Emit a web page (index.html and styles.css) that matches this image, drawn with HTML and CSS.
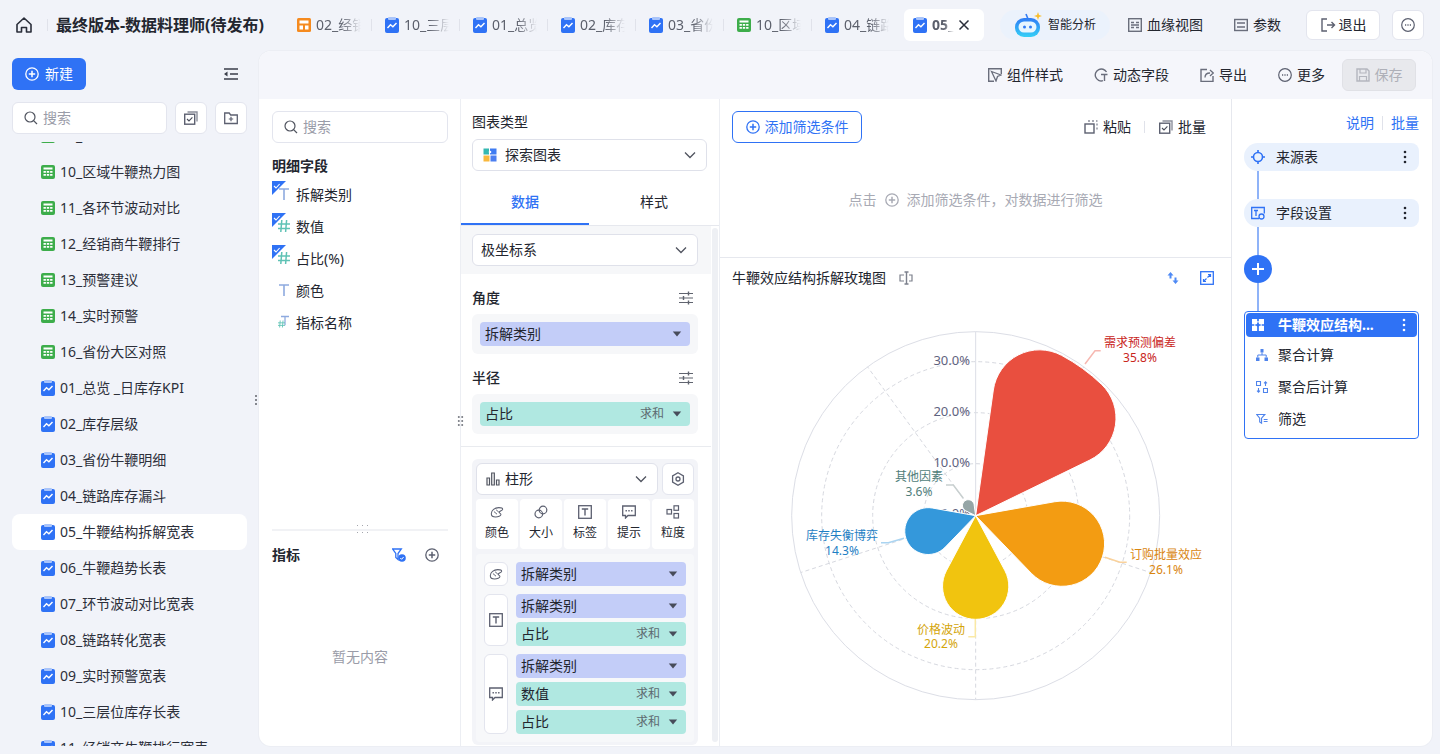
FILE: index.html
```html
<!DOCTYPE html>
<html>
  <head>
    <title>最终版本-数据料理师(待发布)</title>
    <link rel="stylesheet" href="styles.css">
  </head>
  <body>
    <svg class="sprite" width="0" height="0">
      <symbol id="i-chart" viewBox="0 0 14 16">
        <rect x="0" y="1" width="14" height="15" rx="2" fill="#2f72f5"/>
        <rect x="3" y="0" width="8" height="3" rx="1" fill="#a9c4fa"/>
        <path d="M2.5 11l3-3.2 2.4 2 3.6-3.8" fill="none" stroke="#fff" stroke-width="1.4"/>
      </symbol>
      <symbol id="i-table" viewBox="0 0 14 14">
        <rect width="14" height="14" rx="2" fill="#3dad4b"/>
        <path d="M2.5 2.5h9v2h-9zM2.5 6h2.4v1.7H2.5zM5.8 6h2.4v1.7H5.8zM9.1 6h2.4v1.7H9.1zM2.5 9h2.4v1.7H2.5zM5.8 9h2.4v1.7H5.8zM9.1 9h2.4v1.7H9.1z" fill="#fff"/>
      </symbol>
      <symbol id="i-plus" viewBox="0 0 14 14">
        <circle cx="7" cy="7" r="6.2" fill="none" stroke="currentColor" stroke-width="1.3"/>
        <path d="M7 3.8v6.4M3.8 7h6.4" stroke="currentColor" stroke-width="1.5"/>
      </symbol>
      <symbol id="i-search" viewBox="0 0 14 14">
        <circle cx="6" cy="6" r="5" fill="none" stroke="currentColor" stroke-width="1.2"/>
        <path d="M9.6 9.6l3.4 3.4" stroke="currentColor" stroke-width="1.2"/>
      </symbol>
      <symbol id="i-chev" viewBox="0 0 12 8">
        <path d="M1 1.5l5 5 5-5" fill="none" stroke="#50545f" stroke-width="1.3"/>
      </symbol>
      <symbol id="i-caret" viewBox="0 0 10 6">
        <path d="M.8.5h8.4L5 5.5z" fill="#474c5a"/>
      </symbol>
      <symbol id="i-adjust" viewBox="0 0 14 14">
        <path d="M0 2.5h14M0 7h14M0 11.5h14" stroke="#60646f" stroke-width="1.2"/>
        <path d="M9.5.5v4M4.500 5v4M9.5 9.5v4" stroke="#60646f" stroke-width="1.4"/>
      </symbol>
      <symbol id="i-dots" viewBox="0 0 4 14">
        <circle cx="2" cy="2" r="1.3" fill="currentColor"/>
        <circle cx="2" cy="7" r="1.3" fill="currentColor"/>
        <circle cx="2" cy="12" r="1.3" fill="currentColor"/>
      </symbol>
      <symbol id="i-batch" viewBox="0 0 14 14">
        <rect x=".7" y="3.2" width="10" height="10" fill="none" stroke="#5c6070" stroke-width="1.4"/>
        <path d="M3.5 1H13v9.5" fill="none" stroke="#8c8f9b" stroke-width="1.4"/>
        <path d="M3 8l2 2 3.4-3.6" fill="none" stroke="#4a4e5b" stroke-width="1.1"/>
      </symbol>
      <symbol id="i-t" viewBox="0 0 10 12">
        <path d="M0 1h10M5 1v11" fill="none" stroke="#8eaadf" stroke-width="1.6"/>
      </symbol>
      <symbol id="i-num" viewBox="0 0 12 12">
        <path d="M3.8 0L2.8 12M8.6 0L7.6 12M0 4h12M0 8.4h12" fill="none" stroke="#5fc2b5" stroke-width="1.5"/>
      </symbol>
      <symbol id="i-tick" viewBox="0 0 14 14">
        <path d="M0 0h14L0 14z" fill="#2f72f5"/>
        <path d="M2 5l2 2 3.6-4" fill="none" stroke="#fff" stroke-width="1.1"/>
      </symbol>
      <symbol id="i-palette" viewBox="0 0 16 14">
        <path d="M1.5 9C1.5 5 5.5 2 10 2c2.5 0 4.5.8 4.5 1.8 0 1.5-4 2-4 3.5 0 1.4 2 1.2 2 2.5 0 1.7-3.3 3-6 3-2.900 0-5-1.300-5-3.800z" fill="none" stroke="#5c6070" stroke-width="1.2"/>
        <path d="M4.500 6.500l3.500 3M7 4.500l3 2.500" stroke="#5c6070" stroke-width="1.1"/>
      </symbol>
      <symbol id="i-label" viewBox="0 0 14 14">
        <rect x=".7" y=".7" width="12.6" height="12.6" fill="none" stroke="#5c6070" stroke-width="1.3"/>
        <path d="M3.8 4h6.400M7 4v6.500" stroke="#5c6070" stroke-width="1.4"/>
      </symbol>
      <symbol id="i-tip" viewBox="0 0 14 14">
        <path d="M.7 1h12.6v9.500H6L3.500 13v-2.500H.7z" fill="none" stroke="#5c6070" stroke-width="1.3"/>
        <path d="M3.500 5.800h1.400M6.300 5.800h1.400M9.100 5.800h1.400" stroke="#5c6070" stroke-width="1.4"/>
      </symbol>
    </svg>

    <header class="topbar">
      <svg class="home" width="16" height="16" viewBox="0 0 16 16"><path d="M1 7.500L8 1l7 6.500V15h-4.500v-4.500h-5V15H1z" fill="none" stroke="#2a2e3a" stroke-width="1.6" stroke-linejoin="round"/></svg>
      <span class="top-sep"></span>
      <span class="doc-title">最终版本-数据料理师(待发布)</span>
      <div class="tabs">
        <div class="tab"><svg class="tab-icon" viewBox="0 0 14 14"><rect width="14" height="14" rx="1.5" fill="#f58a1f"/><path d="M2.500 2.500h9v3h-9zM2.500 7.500H6v4H2.500zM8 7.500h3.500v4H8z" fill="#fff"/></svg><span class="tab-text">02_经销商</span></div>
        <div class="tab"><svg class="tab-icon"><use href="#i-chart"/></svg><span class="tab-text">10_三层位</span></div>
        <div class="tab"><svg class="tab-icon"><use href="#i-chart"/></svg><span class="tab-text">01_总览</span></div>
        <div class="tab"><svg class="tab-icon"><use href="#i-chart"/></svg><span class="tab-text">02_库存</span></div>
        <div class="tab"><svg class="tab-icon"><use href="#i-chart"/></svg><span class="tab-text">03_省份</span></div>
        <div class="tab"><svg class="tab-icon"><use href="#i-table"/></svg><span class="tab-text">10_区域</span></div>
        <div class="tab"><svg class="tab-icon"><use href="#i-chart"/></svg><span class="tab-text">04_链路</span></div>
        <div class="tab tab-on"><svg class="tab-icon"><use href="#i-chart"/></svg><span class="tab-text">05_牛鞭</span>
          <svg class="tab-close" width="12" height="12" viewBox="0 0 12 12"><path d="M1.500 1.500l9 9M10.500 1.500l-9 9" stroke="#2a2e3a" stroke-width="1.5"/></svg>
        </div>
      </div>
      <div class="ai-pill">
        <svg width="27" height="26" viewBox="0 0 27 26">
          <defs><linearGradient id="robot" x1="0" y1="0" x2="0" y2="1"><stop offset="0" stop-color="#2f7bf5"/><stop offset="1" stop-color="#33d0f7"/></linearGradient></defs>
          <path d="M13 7l-2-5" stroke="#2f7bf5" stroke-width="1.6"/>
          <rect x="0" y="6" width="25" height="19" rx="9" fill="url(#robot)"/>
          <rect x="3.500" y="9.500" width="18" height="11" rx="5.5" fill="#e6f6ff"/>
          <circle cx="9.500" cy="15" r="1.500" fill="#2f7bf5"/><circle cx="15.500" cy="15" r="1.500" fill="#2f7bf5"/>
          <path d="M23 0l1 3 3 1-3 1-1 3-1-3-3-1 3-1z" fill="#f9bd2b"/>
        </svg>
        <span>智能分析</span>
      </div>
      <div class="top-item lineage"><svg width="14" height="14" viewBox="0 0 14 14"><rect x=".7" y=".7" width="12.6" height="12.6" fill="none" stroke="#6a6e7c" stroke-width="1.4"/><path d="M3 4.500h3M8 4.500h3M3 9.500h3M8 9.500h3M3 7h8" stroke="#6a6e7c" stroke-width="1.3"/></svg><span>血缘视图</span></div>
      <div class="top-item params"><svg width="14" height="14" viewBox="0 0 14 14"><rect x=".7" y="1.500" width="12.6" height="11" fill="none" stroke="#6a6e7c" stroke-width="1.4"/><path d="M3 5h8M3 9h8" stroke="#6a6e7c" stroke-width="1.3"/></svg><span>参数</span></div>
      <button class="exit-btn"><svg width="16" height="16" viewBox="0 0 16 16"><path d="M7 2H2v12h5M7 8h7.500M11.500 5l3 3-3 3" fill="none" stroke="#5c6070" stroke-width="1.4"/></svg><span>退出</span></button>
      <button class="more-btn"><svg class="ic14" viewBox="0 0 14 14"><circle cx="7" cy="7" r="6.3" fill="none" stroke="#5c6070" stroke-width="1.2"/><path d="M4 7h1.200M6.400 7h1.200M8.800 7H10" stroke="#5c6070" stroke-width="1.4"/></svg></button>
    </header>

    <div class="workspace">
      <aside class="sidebar">
        <div class="side-top">
          <button class="new-btn"><svg class="ic14"><use href="#i-plus"/></svg><span>新建</span></button>
          <svg width="14" height="12" viewBox="0 0 14 12"><path d="M0 1h14M6 6h8M0 11h14" stroke="#3a3e4a" stroke-width="1.6"/><path d="M0 6l3.500-2.500v5z" fill="#3a3e4a"/></svg>
        </div>
        <div class="side-search">
          <div class="search-box"><svg class="ic14 search-ic"><use href="#i-search"/></svg><span>搜索</span></div>
          <button class="square-btn"><svg class="ic14"><use href="#i-batch"/></svg></button>
          <button class="square-btn"><svg class="ic14" viewBox="0 0 14 14"><path d="M.7 2h4.500l1.500 2h6.600v8.500H.7z" fill="none" stroke="#5c6070" stroke-width="1.3"/><path d="M7 5.800v4.400M4.800 8h4.400" stroke="#5c6070" stroke-width="1.2"/></svg></button>
        </div>
        <div class="side-list">
          <div class="side-row first"><svg class="ic14"><use href="#i-table"/></svg><span>09_</span></div>
          <div class="side-row"><svg class="ic14"><use href="#i-table"/></svg><span>10_区域牛鞭热力图</span></div>
          <div class="side-row"><svg class="ic14"><use href="#i-table"/></svg><span>11_各环节波动对比</span></div>
          <div class="side-row"><svg class="ic14"><use href="#i-table"/></svg><span>12_经销商牛鞭排行</span></div>
          <div class="side-row"><svg class="ic14"><use href="#i-table"/></svg><span>13_预警建议</span></div>
          <div class="side-row"><svg class="ic14"><use href="#i-table"/></svg><span>14_实时预警</span></div>
          <div class="side-row"><svg class="ic14"><use href="#i-table"/></svg><span>16_省份大区对照</span></div>
          <div class="side-row"><svg class="ic-doc"><use href="#i-chart"/></svg><span>01_总览 _日库存KPI</span></div>
          <div class="side-row"><svg class="ic-doc"><use href="#i-chart"/></svg><span>02_库存层级</span></div>
          <div class="side-row"><svg class="ic-doc"><use href="#i-chart"/></svg><span>03_省份牛鞭明细</span></div>
          <div class="side-row"><svg class="ic-doc"><use href="#i-chart"/></svg><span>04_链路库存漏斗</span></div>
          <div class="side-row side-on"><svg class="ic-doc"><use href="#i-chart"/></svg><span>05_牛鞭结构拆解宽表</span></div>
          <div class="side-row"><svg class="ic-doc"><use href="#i-chart"/></svg><span>06_牛鞭趋势长表</span></div>
          <div class="side-row"><svg class="ic-doc"><use href="#i-chart"/></svg><span>07_环节波动对比宽表</span></div>
          <div class="side-row"><svg class="ic-doc"><use href="#i-chart"/></svg><span>08_链路转化宽表</span></div>
          <div class="side-row"><svg class="ic-doc"><use href="#i-chart"/></svg><span>09_实时预警宽表</span></div>
          <div class="side-row"><svg class="ic-doc"><use href="#i-chart"/></svg><span>10_三层位库存长表</span></div>
          <div class="side-row"><svg class="ic-doc"><use href="#i-chart"/></svg><span>11_经销商牛鞭排行宽表</span></div>
        </div>
        <span class="grip grip-side"></span>
      </aside>

      <main class="panel">
        <div class="toolbar">
          <div class="tool"><svg class="ic14" viewBox="0 0 14 14"><path d="M13.300 6V.7H.7v12.600H6" fill="none" stroke="#6a6e7c" stroke-width="1.4"/><path d="M3.500 3.500l9.500 3.500-3.500 1.500L8 13z" fill="none" stroke="#6a6e7c" stroke-width="1.3"/></svg><span>组件样式</span></div>
          <div class="tool"><svg class="ic14" viewBox="0 0 14 14"><path d="M12.500 4A6 6 0 1 0 9 12.700" fill="none" stroke="#6a6e7c" stroke-width="1.4"/><path d="M7 6.500h6.500M10.500 6.500V13" stroke="#6a6e7c" stroke-width="1.4"/></svg><span>动态字段</span></div>
          <div class="tool"><svg class="ic14" viewBox="0 0 14 14"><path d="M7 1.500H1v12h12V8" fill="none" stroke="#6a6e7c" stroke-width="1.4"/><path d="M5 9.500c0-3 2-4.500 5-4.500M10 2l3.300 3-3.300 3" fill="none" stroke="#6a6e7c" stroke-width="1.3"/></svg><span>导出</span></div>
          <div class="tool"><svg class="ic14" viewBox="0 0 14 14"><circle cx="7" cy="7" r="6.3" fill="none" stroke="#5c6070" stroke-width="1.2"/><path d="M4 7h1.200M6.400 7h1.200M8.800 7H10" stroke="#5c6070" stroke-width="1.4"/></svg><span>更多</span></div>
          <button class="save-btn"><svg class="ic14" viewBox="0 0 14 14"><path d="M1 1h10l2 2v10H1z" fill="none" stroke="#b4b6be" stroke-width="1.4"/><path d="M4 1v4h6V1M3.500 13V8.500h7V13" fill="none" stroke="#b4b6be" stroke-width="1.2"/></svg><span>保存</span></button>
        </div>

        <div class="panel-body">
          <section class="fields">
            <div class="search-box field-search"><svg class="ic14 search-ic"><use href="#i-search"/></svg><span>搜索</span></div>
            <div class="sec-title field-head">明细字段</div>
            <div class="field-row"><svg class="f-ic" viewBox="0 1 24 28"><use href="#i-tick" x="0" y="1" width="14" height="14"/><use href="#i-t" x="7" y="8" width="10" height="12"/></svg><span>拆解类别</span></div>
            <div class="field-row"><svg class="f-ic" viewBox="0 1 24 28"><use href="#i-tick" x="0" y="1" width="14" height="14"/><use href="#i-num" x="6" y="8" width="12" height="12"/></svg><span>数值</span></div>
            <div class="field-row"><svg class="f-ic" viewBox="0 1 24 28"><use href="#i-tick" x="0" y="1" width="14" height="14"/><use href="#i-num" x="6" y="8" width="12" height="12"/></svg><span>占比(%)</span></div>
            <div class="field-row"><svg class="f-ic" viewBox="0 1 24 28"><use href="#i-t" x="7" y="8" width="10" height="12"/></svg><span>颜色</span></div>
            <div class="field-row"><svg class="f-ic" viewBox="0 1 24 28"><use href="#i-t" x="9" y="7" width="8" height="11"/><use href="#i-num" x="6" y="12" width="7" height="8"/></svg><span>指标名称</span></div>
            <div class="metrics">
              <span class="grip grip-metrics"></span>
              <div class="metrics-head">
                <span class="sec-title">指标</span>
                <svg class="filter-ic" width="14" height="14" viewBox="0 0 14 14"><path d="M.7 1h8.600L6 5.500v6L3.800 9.500v-4z" fill="none" stroke="#2f72f5" stroke-width="1.3"/><circle cx="10" cy="10" r="3.800" fill="#2f72f5"/><path d="M8.300 10l1.300 1.300 2-2.300" fill="none" stroke="#fff"/></svg>
                <svg class="ic14 plus-grey"><use href="#i-plus"/></svg>
              </div>
              <div class="empty">暂无内容</div>
            </div>
          </section>

          <section class="config">
            <div class="cfg-label">图表类型</div>
            <div class="select type-select">
              <svg class="ic14" viewBox="0 0 14 14"><rect x=".5" y=".5" width="5.500" height="6" fill="#35b8b1"/><rect x="7" y=".5" width="6.500" height="6" fill="#3f7cf2"/><rect x=".5" y="7.500" width="6" height="6" fill="#f9b83c"/><rect x="7.500" y="7.500" width="6" height="6" fill="#4c7ff0"/><circle cx="7" cy="4" r="1.300" fill="#fff"/></svg>
              <span>探索图表</span><svg class="chev"><use href="#i-chev"/></svg>
            </div>
            <div class="cfg-tabs"><div class="cfg-tab cfg-tab-on">数据</div><div class="cfg-tab">样式</div></div>
            <div class="cfg-scroll">
              <div class="cfg-content">
                <div class="coord-bar"><div class="select"><span>极坐标系</span><svg class="chev"><use href="#i-chev"/></svg></div></div>
                <div class="axis-head"><span>角度</span><svg class="ic14"><use href="#i-adjust"/></svg></div>
                <div class="axis-box"><div class="pill pill-dim"><span>拆解类别</span><svg class="caret"><use href="#i-caret"/></svg></div></div>
                <div class="axis-head"><span>半径</span><svg class="ic14"><use href="#i-adjust"/></svg></div>
                <div class="axis-box"><div class="pill pill-mea"><span>占比</span><em>求和</em><svg class="caret"><use href="#i-caret"/></svg></div></div>
                <div class="cfg-line"></div>
                <div class="marks">
                  <div class="marks-top">
                    <div class="select mark-select"><svg class="ic14" viewBox="0 0 14 14"><path d="M1 6h2.500v7H1zM5.700 1h2.600v12H5.700zM10.500 8H13v5h-2.500z" fill="none" stroke="#50545f" stroke-width="1.2"/></svg><span>柱形</span><svg class="chev"><use href="#i-chev"/></svg></div>
                    <button class="square-btn"><svg class="ic14" viewBox="0 0 14 14"><path d="M7 .8l5.400 3.100v6.200L7 13.200l-5.400-3.100V3.900z" fill="none" stroke="#5c6070" stroke-width="1.3"/><circle cx="7" cy="7" r="2" fill="none" stroke="#5c6070" stroke-width="1.3"/></svg></button>
                  </div>
                  <div class="mark-cells">
                    <div class="cell"><svg class="ic14"><use href="#i-palette"/></svg><span>颜色</span></div>
                    <div class="cell"><svg class="ic14" viewBox="0 0 14 14"><circle cx="4.800" cy="9" r="3.800" fill="none" stroke="#5c6070" stroke-width="1.2"/><circle cx="9" cy="5" r="3.800" fill="none" stroke="#5c6070" stroke-width="1.2"/></svg><span>大小</span></div>
                    <div class="cell"><svg class="ic14"><use href="#i-label"/></svg><span>标签</span></div>
                    <div class="cell"><svg class="ic14"><use href="#i-tip"/></svg><span>提示</span></div>
                    <div class="cell"><svg class="ic14" viewBox="0 0 14 14"><rect x="1" y="4.500" width="4.500" height="4.500" fill="none" stroke="#5c6070" stroke-width="1.2"/><rect x="8" y=".8" width="4.500" height="4.500" fill="none" stroke="#5c6070" stroke-width="1.2"/><rect x="8" y="8.500" width="4.500" height="4.500" fill="none" stroke="#5c6070" stroke-width="1.2"/></svg><span>粒度</span></div>
                  </div>
                  <div class="mark-rows">
                    <div class="mark-group">
                      <div class="chip"><svg class="ic14"><use href="#i-palette"/></svg></div>
                      <div class="pills"><div class="pill pill-dim"><span>拆解类别</span><svg class="caret"><use href="#i-caret"/></svg></div></div>
                    </div>
                    <div class="mark-group">
                      <div class="chip"><svg class="ic14"><use href="#i-label"/></svg></div>
                      <div class="pills">
                        <div class="pill pill-dim"><span>拆解类别</span><svg class="caret"><use href="#i-caret"/></svg></div>
                        <div class="pill pill-mea"><span>占比</span><em>求和</em><svg class="caret"><use href="#i-caret"/></svg></div>
                      </div>
                    </div>
                    <div class="mark-group">
                      <div class="chip"><svg class="ic14"><use href="#i-tip"/></svg></div>
                      <div class="pills">
                        <div class="pill pill-dim"><span>拆解类别</span><svg class="caret"><use href="#i-caret"/></svg></div>
                        <div class="pill pill-mea"><span>数值</span><em>求和</em><svg class="caret"><use href="#i-caret"/></svg></div>
                        <div class="pill pill-mea"><span>占比</span><em>求和</em><svg class="caret"><use href="#i-caret"/></svg></div>
                      </div>
                    </div>
                  </div>
                </div>
              </div>
              <div class="scrollbar"></div>
            </div>
            <span class="grip grip-config"></span>
          </section>

          <section class="canvas">
            <div class="filter-area">
              <div class="filter-top">
                <button class="add-filter"><svg class="ic14"><use href="#i-plus"/></svg><span>添加筛选条件</span></button>
                <div class="filter-tools">
                  <div class="tool"><svg class="ic14" viewBox="0 0 14 14"><rect x="1" y="4" width="9" height="9" fill="none" stroke="#5c6070" stroke-width="1.4"/><path d="M4 1h2M8 1h2M12 1h1.500M13 3.500v2M13 7.500v2" stroke="#8c8f9b" stroke-width="1.4"/></svg><span>粘贴</span></div>
                  <span class="filter-sep"></span>
                  <div class="tool"><svg class="ic14"><use href="#i-batch"/></svg><span>批量</span></div>
                </div>
              </div>
              <div class="filter-hint"><span>点击</span><svg class="ic14"><use href="#i-plus"/></svg><span>添加筛选条件，对数据进行筛选</span></div>
            </div>
            <div class="chart-head">
              <span>牛鞭效应结构拆解玫瑰图</span>
              <svg class="ic14 title-ic" viewBox="0 0 14 14"><path d="M5 4H1v6h4M10 4h3v6h-3" fill="none" stroke="#7c808c" stroke-width="1.2"/><path d="M7.500 1v12M5.500 1h4M5.500 13h4" fill="none" stroke="#7c808c" stroke-width="1.4"/></svg>
              <svg class="ic14 swap-ic" viewBox="0 0 14 14"><path d="M4.500 1l-3 3.500h2v3h2v-3h2zM9.500 13l3-3.500h-2v-3h-2v3h-2z" fill="#4f8af5"/></svg>
              <svg class="ic14" viewBox="0 0 14 14"><rect x=".7" y=".7" width="12.6" height="12.6" fill="none" stroke="#2f72f5" stroke-width="1.3"/><path d="M8 3.500h2.500V6M10.500 3.500l-3 3M6 10.500H3.500V8M3.500 10.500l3-3" fill="none" stroke="#2f72f5" stroke-width="1.2"/></svg>
            </div>
            <svg class="rose" width="511" height="448" viewBox="720 298 511 448">
              <g class="grid-dash">
                <circle cx="975.67" cy="515.67" r="154"/>
                <circle cx="975.67" cy="515.67" r="103"/>
                <circle cx="975.67" cy="515.67" r="52"/>
                <path d="M975.67 515.67l108.2-148.9M975.67 515.67l175 56.9M975.67 515.67v184M975.67 515.67l-175 56.9M975.67 515.67l-108.2-148.9"/>
              </g>
              <circle class="grid-out" cx="975.67" cy="515.67" r="184"/>
              <path class="grid-out" d="M975.67 331.67v184"/>
              <g class="axis-text">
                <text x="970" y="365">30.0%</text>
                <text x="970" y="416">20.0%</text>
                <text x="970" y="467">10.0%</text>
                <text x="970" y="518">0.0%</text>
              </g>
              <g transform="translate(780 320) scale(.33333)" stroke="#fff" stroke-width="3">
                <path fill="#e94f3f" d="M587 587L640 210A140 140 0 0 1 844.6 106A545.6 545.6 0 0 1 965 193.5A140 140 0 0 1 929.3 420.3Z"/>
                <path fill="#f39c12" d="M587 587L823.7 545.3A127.8 127.8 0 1 1 754 759.9Z"/>
                <path fill="#f1c40f" d="M587 587L674.8 752.1A99.4 99.4 0 1 1 499.2 752.1Z"/>
                <path fill="#3498db" d="M587 587L495.1 682.1A70.3 70.3 0 1 1 456.7 564Z"/>
                <path fill="#95a5a6" d="M587 587L557.2 572.5A17.6 17.6 0 1 1 582.4 554.2Z"/>
              </g>
              <g class="leaders">
                <path stroke="#f6b8b1" d="M1085 364l10-13.300h5.700"/>
                <path stroke="#fad29b" d="M1105 557.300l15 5h6.700"/>
                <path stroke="#fae9a5" d="M975.300 619v17.700h-7"/>
                <path stroke="#aad4f1" d="M904 538.300l-15.700 4.400H881"/>
                <path stroke="#c8cfcf" d="M963.300 498.300l-10-13.300H946"/>
              </g>
              <g class="chart-label">
                <text class="l-red" x="1140" y="346.5">需求预测偏差</text><text class="l-red" x="1140" y="362">35.8%</text>
                <text class="l-orange" x="1166" y="558.5">订购批量效应</text><text class="l-orange" x="1166" y="573.5">26.1%</text>
                <text class="l-yellow" x="941" y="633.5">价格波动</text><text class="l-yellow" x="941" y="648">20.2%</text>
                <text class="l-blue" x="842" y="539.5">库存失衡博弈</text><text class="l-blue" x="842" y="554.5">14.3%</text>
                <text class="l-grey" x="919" y="481">其他因素</text><text class="l-grey" x="919" y="496">3.6%</text>
              </g>
            </svg>
          </section>

          <section class="flow">
            <div class="flow-links"><span>说明</span><i></i><span>批量</span></div>
            <div class="flow-row">
              <svg class="ic14" viewBox="0 0 14 14"><circle cx="7" cy="7" r="4.500" fill="none" stroke="#2f72f5" stroke-width="1.6"/><path d="M7 0v3M7 11v3M0 7h3M11 7h3" stroke="#2f72f5" stroke-width="1.6"/></svg>
              <span>来源表</span><svg class="flow-dots"><use href="#i-dots"/></svg>
            </div>
            <div class="flow-line"></div>
            <div class="flow-row">
              <svg class="ic14" viewBox="0 0 14 14"><path d="M8 12.500H.7v-11h12.600v6" fill="none" stroke="#2f72f5" stroke-width="1.3"/><path d="M3 4.500h4M5 4.500V10" stroke="#2f72f5" stroke-width="1.3"/><circle cx="10.500" cy="10.500" r="2.500" fill="none" stroke="#2f72f5" stroke-width="1.3"/></svg>
              <span>字段设置</span><svg class="flow-dots"><use href="#i-dots"/></svg>
            </div>
            <div class="flow-line"></div>
            <div class="flow-add"><svg width="12" height="12" viewBox="0 0 12 12"><path d="M6 0v12M0 6h12" stroke="#fff" stroke-width="2"/></svg></div>
            <div class="flow-line"></div>
            <div class="flow-block">
              <div class="block-head">
                <svg width="12" height="12" viewBox="0 0 14 14"><path d="M0 0h6v6H0zM8 0h6v6H8zM0 8h6v6H0zM8 8h6v6H8z" fill="#fff"/><path d="M6 2.500h2v1.500H6zM10 6h1.500v2H10zM2.500 6H4v2H2.500z" fill="#fff"/><circle cx="7" cy="7" r="1.800" fill="#2f72f5"/></svg>
                <span>牛鞭效应结构...</span>
                <svg class="flow-dots"><use href="#i-dots"/></svg>
              </div>
              <div class="block-row"><svg width="12" height="12" viewBox="0 0 12 12"><path d="M4.500 0h3v3.500h-3zM0 8.500h3.500V12H0zM8.500 8.500H12V12H8.500z" fill="#4f84ec"/><path d="M6 3.500V6M1.800 8.500V6h8.400v2.500" fill="none" stroke="#4f84ec"/></svg><span>聚合计算</span></div>
              <div class="block-row"><svg width="12" height="12" viewBox="0 0 12 12"><path d="M.5.500h4v4h-4zM7.500 7.500h4v4h-4z" fill="none" stroke="#4f84ec" stroke-width="1.1"/><path d="M9.500 5V.800M8 2.300L9.500.800 11 2.300M2.500 7v4.200M1 9.700l1.500 1.500L4 9.700" fill="none" stroke="#4f84ec" stroke-width="1.1"/></svg><span>聚合后计算</span></div>
              <div class="block-row"><svg width="12" height="12" viewBox="0 0 14 12"><path d="M.7.700h9.600L6.500 5v6L4.300 9.500V5z" fill="none" stroke="#4f84ec" stroke-width="1.3"/><path d="M9 6.500h4.500M9 9h4.500" stroke="#4f84ec" stroke-width="1.2"/></svg><span>筛选</span></div>
            </div>
          </section>
        </div>
      </main>
    </div>
  </body>
</html>
```

FILE: styles.css
```css
* {
  box-sizing: border-box;
}

body {
  margin: 0;
  width: 1440px;
  height: 754px;
  overflow: hidden;
  display: flex;
  flex-direction: column;
  background-color: #f1f3f9;
  color: #23262f;
  font-family: "Noto Sans", "Noto Sans CJK SC", sans-serif;
  font-size: 14px;
  line-height: 20px;
}

button {
  font: inherit;
  color: inherit;
  padding: 0;
}

svg {
  flex: none;
}

.sprite {
  position: absolute;
}

.ic14 {
  width: 14px;
  height: 14px;
}

.ic-doc {
  width: 14px;
  height: 16px;
}

/* top bar */
.topbar {
  height: 50px;
  flex: none;
  display: flex;
  align-items: center;
}

.home {
  margin-left: 16px;
}

.top-sep {
  width: 1px;
  height: 12px;
  margin-left: 15px;
  background-color: #e0e2ea;
}

.doc-title {
  margin-left: 8px;
  width: 208px;
  font-size: 16px;
  font-weight: 700;
  white-space: nowrap;
}

.tabs {
  display: flex;
  margin-left: 24px;
}

.tab {
  position: relative;
  width: 80px;
  height: 32px;
  margin-right: 8px;
  padding-left: 9px;
  display: flex;
  align-items: center;
  border-radius: 6px;
  color: #5b5f6b;
}

.tab::after {
  content: "";
  position: absolute;
  right: -4px;
  top: 10px;
  width: 1px;
  height: 12px;
  background-color: #e0e2ea;
}

.tab:nth-last-child(-n+2)::after {
  display: none;
}

.tab-icon {
  width: 14px;
  height: 16px;
}

.tab-text {
  width: 45px;
  margin-left: 5px;
  overflow: hidden;
  white-space: nowrap;
  -webkit-mask-image: linear-gradient(90deg, #000 55%, transparent);
  mask-image: linear-gradient(90deg, #000 55%, transparent);
}

.tab-on {
  background-color: #fff;
  margin-right: 0;
}

.tab-on .tab-text {
  width: 22px;
  font-weight: 700;
}

.tab-close {
  margin-left: 4px;
}

.ai-pill {
  width: 110px;
  height: 30px;
  margin-left: 16px;
  padding-left: 15px;
  display: flex;
  align-items: center;
  gap: 6px;
  border-radius: 15px;
  background-color: #ebf2fc;
  font-size: 12px;
}

.top-item {
  display: flex;
  align-items: center;
  gap: 5px;
}

.lineage {
  margin-left: 18px;
}

.params {
  margin-left: 31px;
}

.exit-btn {
  width: 74px;
  height: 30px;
  margin-left: 25px;
  display: flex;
  align-items: center;
  justify-content: center;
  gap: 3px;
  background-color: #fff;
  border: 1px solid #e3e5ee;
  border-radius: 6px;
}

.more-btn {
  width: 32px;
  height: 30px;
  margin-left: 12px;
  display: flex;
  align-items: center;
  justify-content: center;
  background-color: #fff;
  border: 1px solid #e3e5ee;
  border-radius: 6px;
}

.workspace {
  flex: 1;
  min-height: 0;
  display: flex;
}

/* left tree */
.sidebar {
  position: relative;
  width: 259px;
  flex: none;
  padding: 8px 12px 8px;
  display: flex;
  flex-direction: column;
}

.side-top {
  display: flex;
  align-items: center;
  justify-content: space-between;
  padding-right: 9px;
}

.new-btn {
  width: 74px;
  height: 32px;
  display: flex;
  align-items: center;
  justify-content: center;
  gap: 6px;
  background-color: #2f72f5;
  border: none;
  border-radius: 6px;
  color: #fff;
}

.side-search {
  margin-top: 12px;
  display: flex;
  gap: 8px;
}

.search-box {
  flex: 1;
  height: 32px;
  padding-left: 11px;
  display: flex;
  align-items: center;
  gap: 5px;
  background-color: #fff;
  border: 1px solid #e3e5ee;
  border-radius: 6px;
  color: #9a9ca8;
}

.search-ic {
  color: #50545f;
}

.square-btn {
  width: 32px;
  height: 32px;
  flex: none;
  display: flex;
  align-items: center;
  justify-content: center;
  background-color: #fff;
  border: 1px solid #e3e5ee;
  border-radius: 6px;
}

.side-list {
  flex: 1;
  min-height: 0;
  margin-top: 8px;
  overflow: hidden;
}

.side-row {
  height: 36px;
  padding-left: 29px;
  display: flex;
  align-items: center;
  gap: 5px;
  border-radius: 8px;
  white-space: nowrap;
  color: #2c2f3a;
}

.side-row.first {
  margin-top: -24px;
}

.side-on {
  background-color: #fff;
}

.grip {
  position: absolute;
  width: 6px;
  height: 12px;
  background-image: radial-gradient(circle, #85888f 1px, transparent 1.1px);
  background-size: 6px 4px;
}

.grip-side {
  right: 0;
  top: 344px;
}

/* main panel */
.panel {
  width: 1173px;
  margin-top: 1px;
  margin-bottom: 8px;
  display: flex;
  flex-direction: column;
  border-radius: 12px;
  overflow: hidden;
  background-color: #fff;
  box-shadow: 0 0 0 1px #eceef4;
}

.toolbar {
  height: 48px;
  flex: none;
  padding-right: 16px;
  display: flex;
  align-items: center;
  justify-content: flex-end;
  gap: 31px;
  background-color: #f5f6fb;
}

.tool {
  display: flex;
  align-items: center;
  gap: 5px;
  white-space: nowrap;
}

.save-btn {
  width: 74px;
  height: 32px;
  margin-left: -14px;
  display: flex;
  align-items: center;
  justify-content: center;
  gap: 5px;
  background-color: #e8e9ed;
  border: 1px solid #e0e1e6;
  border-radius: 6px;
  color: #aeb0b8;
}

.panel-body {
  flex: 1;
  min-height: 0;
  display: flex;
}

/* fields */
.fields {
  width: 202px;
  flex: none;
  padding: 12px 12px 0 13px;
  display: flex;
  flex-direction: column;
  border-right: 1px solid #eceef3;
}

.field-search {
  flex: none;
}

.sec-title {
  font-weight: 700;
  color: #23262f;
}

.field-head {
  margin-top: 13px;
  margin-bottom: 3px;
}

.field-row {
  height: 32px;
  flex: none;
  display: flex;
  align-items: center;
}

.f-ic {
  width: 24px;
  height: 28px;
}

.metrics {
  position: relative;
  height: 217px;
  margin-top: auto;
  display: flex;
  flex-direction: column;
  border-top: 2px solid #f1f2f5;
}

.grip-metrics {
  left: 83px;
  top: -9px;
  width: 15px;
  height: 14px;
  background-image: radial-gradient(circle, #a4a6ad .8px, transparent 1px);
  background-size: 5px 7px;
}

.metrics-head {
  height: 20px;
  margin-top: 14px;
  display: flex;
  align-items: center;
}

.filter-ic {
  margin-left: auto;
}

.plus-grey {
  margin-left: 19px;
  margin-right: 9px;
  color: #5c6070;
}

.empty {
  flex: 1;
  padding-top: 3px;
  display: flex;
  align-items: center;
  justify-content: center;
  color: #9a9ca8;
}

/* config */
.config {
  position: relative;
  width: 259px;
  flex: none;
  display: flex;
  flex-direction: column;
  border-right: 1px solid #eceef3;
}

.cfg-label {
  margin: 13px 0 0 11px;
}

.select {
  height: 32px;
  padding: 0 8px 0 8px;
  display: flex;
  align-items: center;
  background-color: #fff;
  border: 1px solid #dfe1ea;
  border-radius: 6px;
}

.chev {
  width: 12px;
  height: 8px;
  margin-left: auto;
  margin-right: 2px;
}

.type-select {
  width: 235px;
  margin: 7px 0 0 11px;
  padding-left: 10px;
  gap: 8px;
}

.cfg-tabs {
  height: 45px;
  margin-top: 10px;
  flex: none;
  display: flex;
  border-bottom: 1px solid #e6e8ee;
}

.cfg-tab {
  width: 128px;
  padding-top: 11px;
  text-align: center;
}

.cfg-tab:last-child {
  width: 130px;
}

.cfg-tab-on {
  color: #2f72f5;
  font-weight: 500;
  border-bottom: 2px solid #2f72f5;
  height: 44px;
}

.cfg-scroll {
  flex: 1;
  min-height: 0;
  display: flex;
  overflow: hidden;
}

.cfg-content {
  width: 250px;
  flex: none;
}

.scrollbar {
  width: 6px;
  margin: 2px 0 4px 1px;
  border-radius: 3px;
  background-color: #eef0f4;
}

.coord-bar {
  height: 48px;
  padding: 8px 13px 8px 11px;
  background-color: #f6f7f9;
}

.axis-head {
  height: 20px;
  margin: 14px 18px 6px 11px;
  display: flex;
  align-items: center;
  justify-content: space-between;
  font-weight: 500;
}

.axis-box {
  margin: 0 13px 0 11px;
  padding: 8px;
  border-radius: 6px;
  background-color: #f6f7f9;
}

.pill {
  height: 24px;
  padding: 0 8px 0 5px;
  display: flex;
  align-items: center;
  border-radius: 4px;
}

.pill em {
  margin-left: auto;
  margin-right: 8px;
  font-style: normal;
  font-size: 12px;
  color: #5d6a70;
}

.pill-dim {
  background-color: #c3cdf8;
}

.pill-mea {
  background-color: #b0e8e1;
}

.caret {
  width: 10px;
  height: 6px;
}

.pill-dim .caret {
  margin-left: auto;
}

.cfg-line {
  height: 1px;
  margin-top: 12px;
  background-color: #e9ebef;
}

.marks {
  margin: 12px 13px 0 11px;
  padding: 4px 4px 3px;
  border-radius: 6px;
  background-color: #f3f4f8;
}

.marks-top {
  display: flex;
  gap: 4px;
}

.mark-select {
  flex: 1;
  padding-left: 9px;
  gap: 5px;
}

.mark-cells {
  margin-top: 4px;
  display: flex;
  gap: 2px;
}

.cell {
  width: 42px;
  height: 50px;
  padding-top: 6px;
  display: flex;
  flex-direction: column;
  align-items: center;
  gap: 5px;
  background-color: #fff;
  border-radius: 4px;
  font-size: 12px;
  line-height: 18px;
}

.mark-rows {
  margin-top: 5px;
  padding: 8px;
  display: flex;
  flex-direction: column;
  gap: 8px;
  border-radius: 4px;
  background-color: #f7f8fa;
}

.mark-group {
  display: flex;
  gap: 8px;
}

.chip {
  width: 24px;
  display: flex;
  align-items: center;
  justify-content: center;
  background-color: #fff;
  border: 1px solid #e3e5ee;
  border-radius: 6px;
}

.pills {
  flex: 1;
  display: flex;
  flex-direction: column;
  gap: 4px;
}

.grip-config {
  left: -4px;
  top: 316px;
  width: 7px;
  background-size: 3.5px 4px;
  background-image: radial-gradient(circle, #85888f .8px, transparent 1px);
}

/* chart */
.canvas {
  width: 512px;
  flex: none;
  display: flex;
  flex-direction: column;
  border-right: 1px solid #e6e8ee;
}

.filter-area {
  height: 159px;
  flex: none;
  padding: 12px 25px 0 12px;
  border-bottom: 1px solid #e6e8ee;
}

.filter-top {
  display: flex;
  align-items: center;
  justify-content: space-between;
}

.add-filter {
  width: 130px;
  height: 32px;
  display: flex;
  align-items: center;
  justify-content: center;
  gap: 5px;
  background-color: #fff;
  border: 1px solid #2f72f5;
  border-radius: 6px;
  color: #2f72f5;
}

.filter-tools {
  display: flex;
  align-items: center;
}

.filter-sep {
  width: 1px;
  height: 12px;
  margin: 0 14px 0 13px;
  background-color: #e0e2ea;
}

.filter-hint {
  margin-top: 47px;
  margin-right: -13px;
  display: flex;
  align-items: center;
  justify-content: center;
  gap: 8px;
  color: #a8aab4;
}

.chart-head {
  height: 40px;
  flex: none;
  padding: 0 17px 0 12px;
  display: flex;
  align-items: center;
}

.title-ic {
  margin-left: 13px;
}

.swap-ic {
  margin-left: auto;
  margin-right: 20px;
}

.rose {
  display: block;
}

.grid-dash {
  fill: none;
  stroke: #d6d8df;
  stroke-dasharray: 4 3;
}

.grid-out {
  fill: none;
  stroke: #dcdee6;
}

.axis-text {
  fill: #5f6380;
  font-size: 13px;
  text-anchor: end;
}

.leaders path {
  fill: none;
  stroke-width: 1.5;
}

.chart-label text {
  font-size: 12px;
  text-anchor: middle;
}

.l-red {
  fill: #c9261c;
}

.l-orange {
  fill: #d9850f;
}

.l-yellow {
  fill: #d4a50b;
}

.l-blue {
  fill: #1f7fc4;
}

.l-grey {
  fill: #507d7a;
}

/* right flow */
.flow {
  flex: 1;
  padding: 14px 13px 0 12px;
  display: flex;
  flex-direction: column;
}

.flow-links {
  height: 20px;
  margin-bottom: 10px;
  display: flex;
  align-items: center;
  justify-content: flex-end;
  gap: 8px;
  color: #2f72f5;
}

.flow-links i {
  width: 1px;
  height: 14px;
  background-color: #e0e2ea;
}

.flow-row {
  height: 28px;
  flex: none;
  padding: 0 12px 0 7px;
  display: flex;
  align-items: center;
  gap: 11px;
  background-color: #e9f1fd;
  border-radius: 14px 8px 8px 14px;
  color: #23262f;
}

.flow-dots {
  width: 4px;
  height: 14px;
  margin-left: auto;
}

.flow-line {
  width: 2px;
  height: 28px;
  flex: none;
  margin-left: 13px;
  background-color: #8fb3f8;
}

.flow-add {
  width: 28px;
  height: 28px;
  flex: none;
  display: flex;
  align-items: center;
  justify-content: center;
  border-radius: 50%;
  background-color: #2f72f5;
}

.flow-block {
  height: 128px;
  padding: 1px 1px 3px;
  border: 1px solid #2f72f5;
  border-radius: 4px;
}

.block-head {
  height: 24px;
  padding: 0 11px 0 6px;
  display: flex;
  align-items: center;
  gap: 14px;
  background-color: #2f72f5;
  border-radius: 4px;
  color: #fff;
  font-weight: 700;
  white-space: nowrap;
}

.block-row {
  height: 32px;
  padding-left: 10px;
  display: flex;
  align-items: center;
  gap: 10px;
}

.block-head + .block-row {
  margin-top: 2px;
}
```
